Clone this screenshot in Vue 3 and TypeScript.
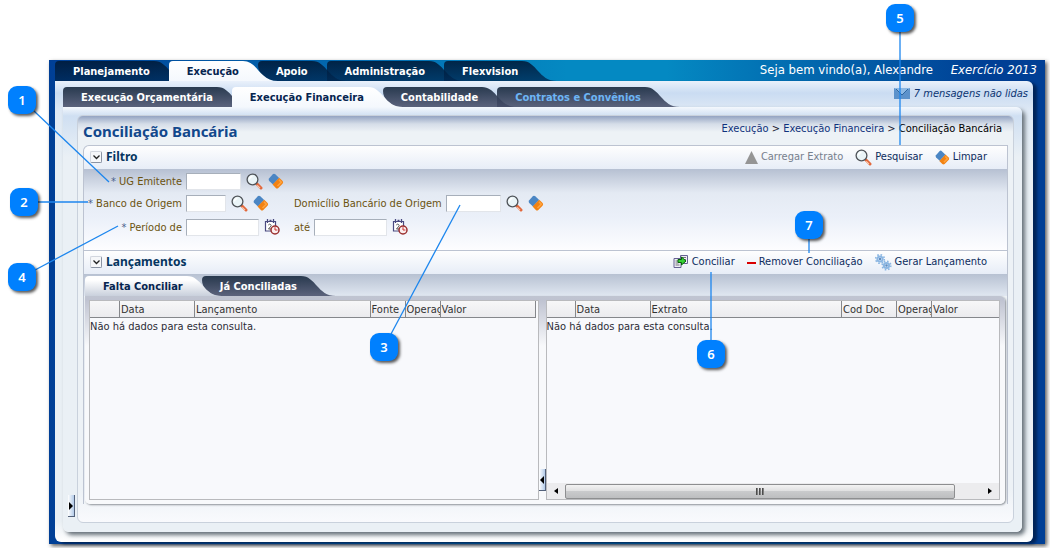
<script setup lang="ts">
import { ref } from 'vue'

interface Tab { label: string; muted?: boolean }
interface Column { label: string; width?: number }
interface Callout { n: number; x: number; y: number; x1: number; y1: number; x2: number; y2: number }

const modules: Tab[] = [
  { label: 'Planejamento' }, { label: 'Execução' }, { label: 'Apoio' },
  { label: 'Administração' }, { label: 'Flexvision' },
]
const areas: Tab[] = [
  { label: 'Execução Orçamentária' }, { label: 'Execução Financeira' },
  { label: 'Contabilidade' }, { label: 'Contratos e Convênios', muted: true },
]
const views: Tab[] = [{ label: 'Falta Conciliar' }, { label: 'Já Conciliadas' }]
const tabModule = ref(1)
const tabArea = ref(1)
const tabView = ref(0)

const entryColumns: Column[] = [
  { label: '', width: 30 }, { label: 'Data', width: 75 }, { label: 'Lançamento' },
  { label: 'Fonte', width: 35 }, { label: 'Operaç', width: 35 }, { label: 'Valor', width: 95 },
]
const statementColumns: Column[] = [
  { label: '', width: 29 }, { label: 'Data', width: 75 }, { label: 'Extrato' },
  { label: 'Cod Doc', width: 55 }, { label: 'Operaç', width: 35 }, { label: 'Valor', width: 67 },
]

const callouts: Callout[] = [
  { n: 1, x: 8, y: 86, x1: 34, y1: 111, x2: 109, y2: 182 },
  { n: 2, x: 10, y: 188, x1: 38, y1: 202, x2: 88, y2: 202 },
  { n: 3, x: 370, y: 333, x1: 391, y1: 334, x2: 460, y2: 205 },
  { n: 4, x: 8, y: 263, x1: 35, y1: 270, x2: 118, y2: 226 },
  { n: 5, x: 886, y: 4, x1: 900, y1: 32, x2: 900, y2: 145 },
  { n: 6, x: 697, y: 340, x1: 711, y1: 272, x2: 711, y2: 340 },
  { n: 7, x: 795, y: 211, x1: 809, y1: 239, x2: 809, y2: 253 },
]
</script>

<template>
  <svg class="defs" width="0" height="0" aria-hidden="true">
    <defs>
      <linearGradient id="navy" gradientUnits="userSpaceOnUse" x1="0" y1="0" x2="0" y2="20">
        <stop offset="0" stop-color="#001a38" stop-opacity=".88" /><stop offset="1" stop-color="#00264f" stop-opacity=".74" />
      </linearGradient>
      <linearGradient id="slate" gradientUnits="userSpaceOnUse" x1="0" y1="0" x2="0" y2="20">
        <stop offset="0" stop-color="#24354a" stop-opacity=".97" /><stop offset="1" stop-color="#434a66" stop-opacity=".84" />
      </linearGradient>
      <linearGradient id="white" gradientUnits="userSpaceOnUse" x1="0" y1="0" x2="0" y2="20">
        <stop offset="0" stop-color="#ffffff" /><stop offset="1" stop-color="#f4f8fd" />
      </linearGradient>
      <linearGradient id="silver" gradientUnits="userSpaceOnUse" x1="0" y1="0" x2="0" y2="20">
        <stop offset=".2" stop-color="#ffffff" /><stop offset="1" stop-color="#c9d0dc" />
      </linearGradient>
    </defs>
    <symbol id="i-search" viewBox="0 0 17 17">
      <path d="M10.8 10.800 15 15" stroke="#e2683c" stroke-width="3" stroke-linecap="round" />
      <path d="M11.200 12.400 14 15.200" stroke="#f9cdb4" stroke-width="1.200" />
      <circle cx="6.500" cy="6.500" r="5.400" fill="#eaf4f7" stroke="#505459" stroke-width="1.300" />
      <path d="M3.500 6.500a3 3 0 0 1 3-3" stroke="#fff" stroke-width="1.400" fill="none" />
    </symbol>
    <symbol id="i-eraser" viewBox="0 0 16 16">
      <path d="M5 1Q6.200.2 7.300 1.200L11.200 5 5 11.400 1.200 8Q.2 7 1 5.600Z" fill="#4b86c4" />
      <path d="M11.200 4.800 14.600 8Q15.600 9.200 14.700 10.500L10.300 15Q9 16 7.800 15L4.600 11.600Z" fill="#f28212" />
      <path d="M11 6.800 13.300 9.200 9.500 13" stroke="#ffa23c" stroke-width="1.600" fill="none" />
    </symbol>
    <symbol id="i-calendar" viewBox="0 0 16 16">
      <path d="M1.500 2.500h10v9.500h-10z" fill="#fff" stroke="#4a4a80" stroke-width="1.200" />
      <path d="M3.500 0v4M9.500 0v4M5.500 1.500h2" stroke="#4a4a80" stroke-width="1.300" />
      <path d="M4.300 6q1-1.400 2.300-.5t-.3 2.400L4.500 10h3" fill="none" stroke="#555" stroke-width="1" />
      <circle cx="11" cy="11" r="4" fill="#fbeeee" stroke="#9a2f2f" stroke-width="1.500" />
      <path d="M11 8.200V11h2.400" fill="none" stroke="#c33" stroke-width="1" />
    </symbol>
    <symbol id="i-up" viewBox="0 0 13 13"><path d="M6.500 0 13 13H0Z" fill="#959595" /></symbol>
    <symbol id="i-merge" viewBox="0 0 16 16">
      <path d="M7.500 1.500h7v8h-7z" fill="#eeeef8" stroke="#666091" />
      <path d="M9 3.500h4M9 5.500h4M9 7.500h4" stroke="#777" />
      <path d="M1 4.500h7v9H1z" fill="#eeeef8" stroke="#666091" />
      <path d="M2.500 7h3M2.500 9h3M2.500 11h4" stroke="#777" />
      <path d="M5 5.500h3.500V3L13 7 8.500 11V8.500H5z" fill="#35d035" stroke="#08610b" />
    </symbol>
    <symbol id="i-minus" viewBox="0 0 9 9"><path d="M0 4h9v2H0z" fill="#d90000" /></symbol>
    <symbol id="i-gears" viewBox="0 0 17 17">
      <g fill="none" stroke="#8bb6e2">
        <circle cx="5" cy="5" r="2.600" stroke-width="2" />
        <circle cx="5" cy="5" r="4.300" stroke-width="1.600" stroke-dasharray="1.600 1.780" />
        <circle cx="11.500" cy="11.500" r="2.600" stroke-width="2" />
        <circle cx="11.500" cy="11.500" r="4.300" stroke-width="1.600" stroke-dasharray="1.600 1.780" />
      </g>
      <circle cx="5" cy="5" r="1.200" fill="#5e8cc0" /><circle cx="11.500" cy="11.500" r="1.200" fill="#5e8cc0" />
    </symbol>
    <symbol id="i-mail" viewBox="0 0 16 11">
      <path d="M0 0h16v11H0z" fill="#5c92cb" /><path d="M0 0h16L8 7z" fill="#8db9e4" />
      <path d="M2 1 8 7l6-6" fill="none" stroke="#2d659f" />
    </symbol>
    <symbol id="i-chevron" viewBox="0 0 7 5"><path d="M.5.5 3.500 3.500 6.500.5" fill="none" stroke="#222" stroke-width="1.300" /></symbol>
  </svg>

  <main class="shell">
    <header class="top">
      <nav class="tabs navy" aria-label="Módulos">
        <button v-for="(t, i) in modules" :key="t.label" type="button" class="tab" :class="{ on: tabModule === i, after: tabModule === i - 1 }" @click="tabModule = i">
          <span class="face">{{ t.label }}</span>
          <svg class="slope" width="35" height="20" viewBox="0 0 35 20"><path d="M0 0C15 0 16 20 35 20H0Z" :fill="tabModule === i ? 'url(#white)' : 'url(#navy)'" /></svg>
        </button>
      </nav>
      <p class="hello">Seja bem vindo(a), Alexandre <em>Exercício 2013</em></p>
    </header>

    <div class="outer">
      <div class="bar">
        <nav class="tabs slate" aria-label="Áreas">
          <button v-for="(t, i) in areas" :key="t.label" type="button" class="tab" :class="{ on: tabArea === i, after: tabArea === i - 1, muted: t.muted }" @click="tabArea = i">
            <span class="face">{{ t.label }}</span>
            <svg class="slope" width="35" height="20" viewBox="0 0 35 20"><path d="M0 0C15 0 16 20 35 20H0Z" :fill="tabArea === i ? 'url(#white)' : 'url(#slate)'" /></svg>
          </button>
        </nav>
        <a class="mail" href="#"><svg width="16" height="11"><use href="#i-mail" /></svg>7 mensagens não lidas</a>
      </div>

      <div class="sheet">
        <button class="handle side" type="button" aria-label="Expandir"><svg width="4" height="8" viewBox="0 0 4 8"><path d="M0 0 4 4 0 8Z" /></svg></button>
        <div class="content">
          <div class="heading">
            <h1>Conciliação Bancária</h1>
            <nav class="crumbs" aria-label="Trilha"><a href="#">Execução</a> &gt; <a href="#">Execução Financeira</a> &gt; <span>Conciliação Bancária</span></nav>
          </div>

          <div class="box">
            <section>
              <div class="head">
                <button class="toggle" type="button" aria-label="Recolher filtro"><svg width="7" height="5"><use href="#i-chevron" /></svg></button>
                <h2>Filtro</h2>
                <div class="tools">
                  <button type="button" class="tool" disabled><svg width="13" height="13"><use href="#i-up" /></svg>Carregar Extrato</button>
                  <button type="button" class="tool"><svg width="17" height="17"><use href="#i-search" /></svg>Pesquisar</button>
                  <button type="button" class="tool"><svg width="15" height="15"><use href="#i-eraser" /></svg>Limpar</button>
                </div>
              </div>
              <form class="filter" @submit.prevent>
                <div class="line">
                  <label class="lead" for="ug"><i>*</i> UG Emitente</label>
                  <div class="field">
                    <input id="ug" class="mid" type="text">
                    <button type="button" class="icon" aria-label="Pesquisar UG"><svg width="17" height="17"><use href="#i-search" /></svg></button>
                    <button type="button" class="icon" aria-label="Limpar UG"><svg width="16" height="16"><use href="#i-eraser" /></svg></button>
                  </div>
                </div>
                <div class="line">
                  <label class="lead" for="banco"><i>*</i> Banco de Origem</label>
                  <div class="field">
                    <input id="banco" class="small" type="text">
                    <button type="button" class="icon" aria-label="Pesquisar banco"><svg width="17" height="17"><use href="#i-search" /></svg></button>
                    <button type="button" class="icon" aria-label="Limpar banco"><svg width="16" height="16"><use href="#i-eraser" /></svg></button>
                  </div>
                  <label for="dom">Domicílio Bancário de Origem</label>
                  <div class="field">
                    <input id="dom" class="mid" type="text">
                    <button type="button" class="icon" aria-label="Pesquisar domicílio"><svg width="17" height="17"><use href="#i-search" /></svg></button>
                    <button type="button" class="icon" aria-label="Limpar domicílio"><svg width="16" height="16"><use href="#i-eraser" /></svg></button>
                  </div>
                </div>
                <div class="line last">
                  <label class="lead" for="de"><i>*</i> Período de</label>
                  <div class="field">
                    <input id="de" class="date" type="text">
                    <button type="button" class="icon" aria-label="Data inicial"><svg width="16" height="16"><use href="#i-calendar" /></svg></button>
                  </div>
                  <label for="ate">até</label>
                  <div class="field">
                    <input id="ate" class="date" type="text">
                    <button type="button" class="icon" aria-label="Data final"><svg width="16" height="16"><use href="#i-calendar" /></svg></button>
                  </div>
                </div>
              </form>
            </section>

            <section>
              <div class="head">
                <button class="toggle" type="button" aria-label="Recolher lançamentos"><svg width="7" height="5"><use href="#i-chevron" /></svg></button>
                <h2>Lançamentos</h2>
                <div class="tools">
                  <button type="button" class="tool"><svg width="16" height="16"><use href="#i-merge" /></svg>Conciliar</button>
                  <button type="button" class="tool"><svg width="9" height="9"><use href="#i-minus" /></svg>Remover Conciliação</button>
                  <button type="button" class="tool"><svg width="17" height="17"><use href="#i-gears" /></svg>Gerar Lançamento</button>
                </div>
              </div>
              <div class="strip">
                <nav class="tabs slate" aria-label="Situação">
                  <button v-for="(t, i) in views" :key="t.label" type="button" class="tab" :class="{ on: tabView === i, after: tabView === i - 1 }" @click="tabView = i">
                    <span class="face">{{ t.label }}</span>
                    <svg class="slope" width="35" height="20" viewBox="0 0 35 20"><path d="M0 0C15 0 16 20 35 20H0Z" :fill="tabView === i ? 'url(#silver)' : 'url(#slate)'" /></svg>
                  </button>
                </nav>
              </div>
              <div class="panes">
                <div class="pane left">
                  <table>
                    <colgroup><col v-for="(c, i) in entryColumns" :key="i" :width="c.width"></colgroup>
                    <thead><tr><th v-for="(c, i) in entryColumns" :key="i" scope="col">{{ c.label }}</th></tr></thead>
                    <tbody><tr><td :colspan="entryColumns.length">Não há dados para esta consulta.</td></tr></tbody>
                  </table>
                </div>
                <div class="gutter">
                  <button class="handle" type="button" aria-label="Recolher painel"><svg width="4" height="8" viewBox="0 0 4 8"><path d="M4 0 0 4 4 8Z" /></svg></button>
                </div>
                <div class="pane right">
                  <table>
                    <colgroup><col v-for="(c, i) in statementColumns" :key="i" :width="c.width"></colgroup>
                    <thead><tr><th v-for="(c, i) in statementColumns" :key="i" scope="col">{{ c.label }}</th></tr></thead>
                    <tbody><tr><td :colspan="statementColumns.length">Não há dados para esta consulta.</td></tr></tbody>
                  </table>
                  <div class="scroll">
                    <button type="button" aria-label="Rolar à esquerda"><svg width="4" height="6" viewBox="0 0 4 6"><path d="M4 0 0 3 4 6Z" /></svg></button>
                    <div class="thumb"><i></i><i></i><i></i></div>
                    <button class="end" type="button" aria-label="Rolar à direita"><svg width="4" height="6" viewBox="0 0 4 6"><path d="M0 0 4 3 0 6Z" /></svg></button>
                  </div>
                </div>
              </div>
            </section>
          </div>
        </div>
      </div>
    </div>
  </main>

  <svg class="leads" aria-hidden="true">
    <line v-for="c in callouts" :key="c.n" :x1="c.x1" :y1="c.y1" :x2="c.x2" :y2="c.y2" />
  </svg>
  <span v-for="c in callouts" :key="c.n" class="badge" :style="{ left: c.x + 'px', top: c.y + 'px' }">{{ c.n }}</span>
</template>

<style>
body { background: #fff; font-family: "DejaVu Sans Condensed", "Noto Sans", sans-serif; font-size: 11px; }
</style>

<style scoped>
* { box-sizing: border-box; }
button { border: 0; padding: 0; background: none; font: inherit; color: inherit; cursor: pointer; }
svg { flex: none; display: block; }
.defs { position: absolute; }
h1, h2, p { margin: 0; }
a { color: inherit; text-decoration: none; }

.shell {
  margin: 60px 5px 4px 49px;
  padding: 1px 12px 2px 6px;
  background: linear-gradient(90deg, #003f96, #0489c2 52%, #0489c2 62%, #003f95 94%);
  box-shadow: 2px 2px 4px rgba(0, 0, 0, .65);
}
.top { display: flex; justify-content: space-between; height: 20px; }
.hello { color: #fff; font-size: 13px; line-height: 17px; margin-right: -4px; white-space: nowrap; }
.hello em { margin-left: 14px; }

.tabs { display: flex; }
.tab { display: flex; height: 20px; margin-right: -20px; position: relative; font-weight: 700; font-size: 11px; line-height: 22px; color: #fff; white-space: nowrap; }
.face { display: block; height: 20px; padding: 0 4px 0 18px; border-radius: 4px 0 0 0; }
.navy .face { background: linear-gradient(rgba(0, 26, 56, .88), rgba(0, 38, 79, .74)); }
.slate .face { background: linear-gradient(rgba(36, 53, 74, .97), rgba(67, 74, 102, .84)); }
.tab.on { z-index: 2; color: #06244f; }
.tab.on .face { background: linear-gradient(#fff, #f4f8fd); }
.tab.after .face { border-bottom-left-radius: 18px 16px; }
.tab.muted { color: #6db5f5; }
.strip .tab.on .face { background: linear-gradient(#fff 20%, #c9d0dc); }

.outer {
  padding: 6px 11px 10px 8px;
  border-radius: 0 6px 6px 6px;
  background: linear-gradient(#eaf1fb, #cadcf2 12px, #dfe9f5 30px, #e8eff4 90px, #e9eff4 440px, #fff);
  box-shadow: 4px 2px 3px #002458;
}
.bar { display: flex; justify-content: space-between; }
.mail { display: flex; gap: 4px; align-items: center; height: 13px; margin-right: -6px; color: #0b3471; font-style: italic; white-space: nowrap; }
.sheet {
  display: flex;
  padding: 8px 8px 9px 6px;
  border-radius: 0 6px 6px 6px;
  background: linear-gradient(#f4f8fd, #cfdff2 9px, #eaf0f5 50px);
  box-shadow: 3px 3px 4px #667078;
}
.handle { display: flex; align-items: center; justify-content: center; width: 7px; height: 22px; background: linear-gradient(90deg, #fff, #b3cbe9); border-right: 1px solid #53617a; border-bottom: 1px solid #53617a; }
.side { align-self: flex-end; margin: 0 2px 6px -1px; }
.content {
  flex: 1;
  min-width: 0;
  padding: 0 5px 18px;
  border: 1px solid #c9d1dc;
  border-radius: 6px;
  background: linear-gradient(#94a4c2, #d5dde8 8px, #edf2f6 16px, #edf2f6 92%, #f9fafd);
}
.heading { display: flex; justify-content: space-between; height: 29px; padding-right: 6px; }
h1 { font-family: "Noto Sans", sans-serif; font-size: 15px; line-height: 30px; color: #12488c; }
.crumbs { line-height: 25px; color: #223; white-space: nowrap; }
.crumbs a { color: #10327c; }
.crumbs span { color: #000; }

.box { border: 1px solid #bcc3d1; border-bottom: 0; border-radius: 6px 0 0 0; }
.head { display: flex; align-items: center; height: 23px; padding: 0 20px 1px 6px; background: linear-gradient(#fefefe, #e7edf7); border-radius: 6px 0 0 0; }
section + section .head { border-top: 1px solid #bcc3d1; height: 24px; border-radius: 0; }
.toggle { display: flex; align-items: center; justify-content: center; width: 12px; height: 12px; border: 1px solid #d2d6de; border-right-color: #8a93a3; border-bottom-color: #8a93a3; background: #f6f7f9; border-radius: 2px; }
h2 { margin-left: 4px; font-family: "Noto Sans", sans-serif; font-size: 12px; line-height: 20px; color: #053560; }
.tools { display: flex; gap: 12px; margin-left: auto; }
.tool { display: flex; align-items: center; gap: 3px; color: #0d2c5e; line-height: 20px; white-space: nowrap; }
.tool:disabled { color: #77808d; }

.filter { padding: 1px 0 12px 2px; background: linear-gradient(#b6c0d2, #e4eaf3 24px, #ebf0f9 60%, #fdfdff); color: #6b5310; }
.line { display: flex; align-items: center; height: 22px; }
.line.last { margin-top: 2px; }
label { white-space: nowrap; margin-right: 4px; }
.lead { width: 96px; text-align: right; }
.lead i { font-style: normal; color: #4a5f8c; }
.field { display: flex; align-items: center; gap: 5px; }
.lead + .field { width: 108px; }
.field input { height: 17px; padding: 0 3px; border: 1px solid #e2e5ea; border-top-color: #a7afba; border-left-color: #a7afba; background: #fff; font: inherit; }
.mid { width: 55px; }
.small { width: 40px; }
.date { width: 73px; }
.icon { display: block; height: 18px; }

.strip { height: 22px; padding: 2px 0 0 1px; background: linear-gradient(#b7c1d2, #e0e7f1); }
.panes {
  display: flex;
  height: 208px;
  margin: 0 2px 0 1px;
  padding: 4px 5px 4px 4px;
  border-radius: 0 5px 5px 5px;
  background: linear-gradient(#c0c5d1, #bfc3d1 4px, #f8f9fb 50px);
  box-shadow: 1px 1px 2px #8d9298;
}
.pane { border: 1px solid #b9babd; background: #f8f9fc; display: flex; flex-direction: column; min-width: 0; }
.pane.left { flex: 449; padding-right: 2px; }
.pane.right { flex: 456; }
.gutter { width: 7px; display: flex; align-items: flex-end; padding-bottom: 9px; }
table { width: 100%; table-layout: fixed; border-collapse: separate; border-spacing: 0; color: #333; font-size: 11px; }
th { height: 17px; padding: 0 0 0 1px; overflow: hidden; white-space: nowrap; text-align: left; font-weight: 400; line-height: 15px; border-right: 1px solid #85878b; border-bottom: 1px solid #85878b; background: linear-gradient(#f7f7f8, #ebebee); }
.right th:last-child { border-right: 0; }
td { padding: 0; line-height: 17px; color: #2c2c36; }
.scroll { display: flex; align-items: center; margin-top: auto; height: 16px; background: #ececee; }
.scroll button { width: 18px; display: flex; justify-content: center; }
.scroll .end { width: auto; margin: 0 7px 0 auto; }
.thumb { flex: 0 1 390px; height: 15px; display: flex; gap: 1px; align-items: center; justify-content: center; border: 1px solid #8d8e90; border-radius: 2px; background: linear-gradient(#f3f3f3, #e0e0e1 45%, #c9cacc 50%, #bdbec0); }
.thumb i { width: 2px; height: 7px; background: linear-gradient(90deg, #333, #999); }

.leads { position: absolute; left: 0; top: 0; width: 100%; height: 548px; pointer-events: none; }
.leads line { stroke: #1c86ee; stroke-width: 1.3px; }
.badge { position: absolute; width: 28px; height: 28px; border-radius: 9px; background: #0080fe; color: #fff; font-family: "Noto Sans", sans-serif; font-size: 13px; font-weight: 600; line-height: 28px; text-align: center; box-shadow: 2px 2px 3px rgba(0, 0, 0, .65); }
</style>
